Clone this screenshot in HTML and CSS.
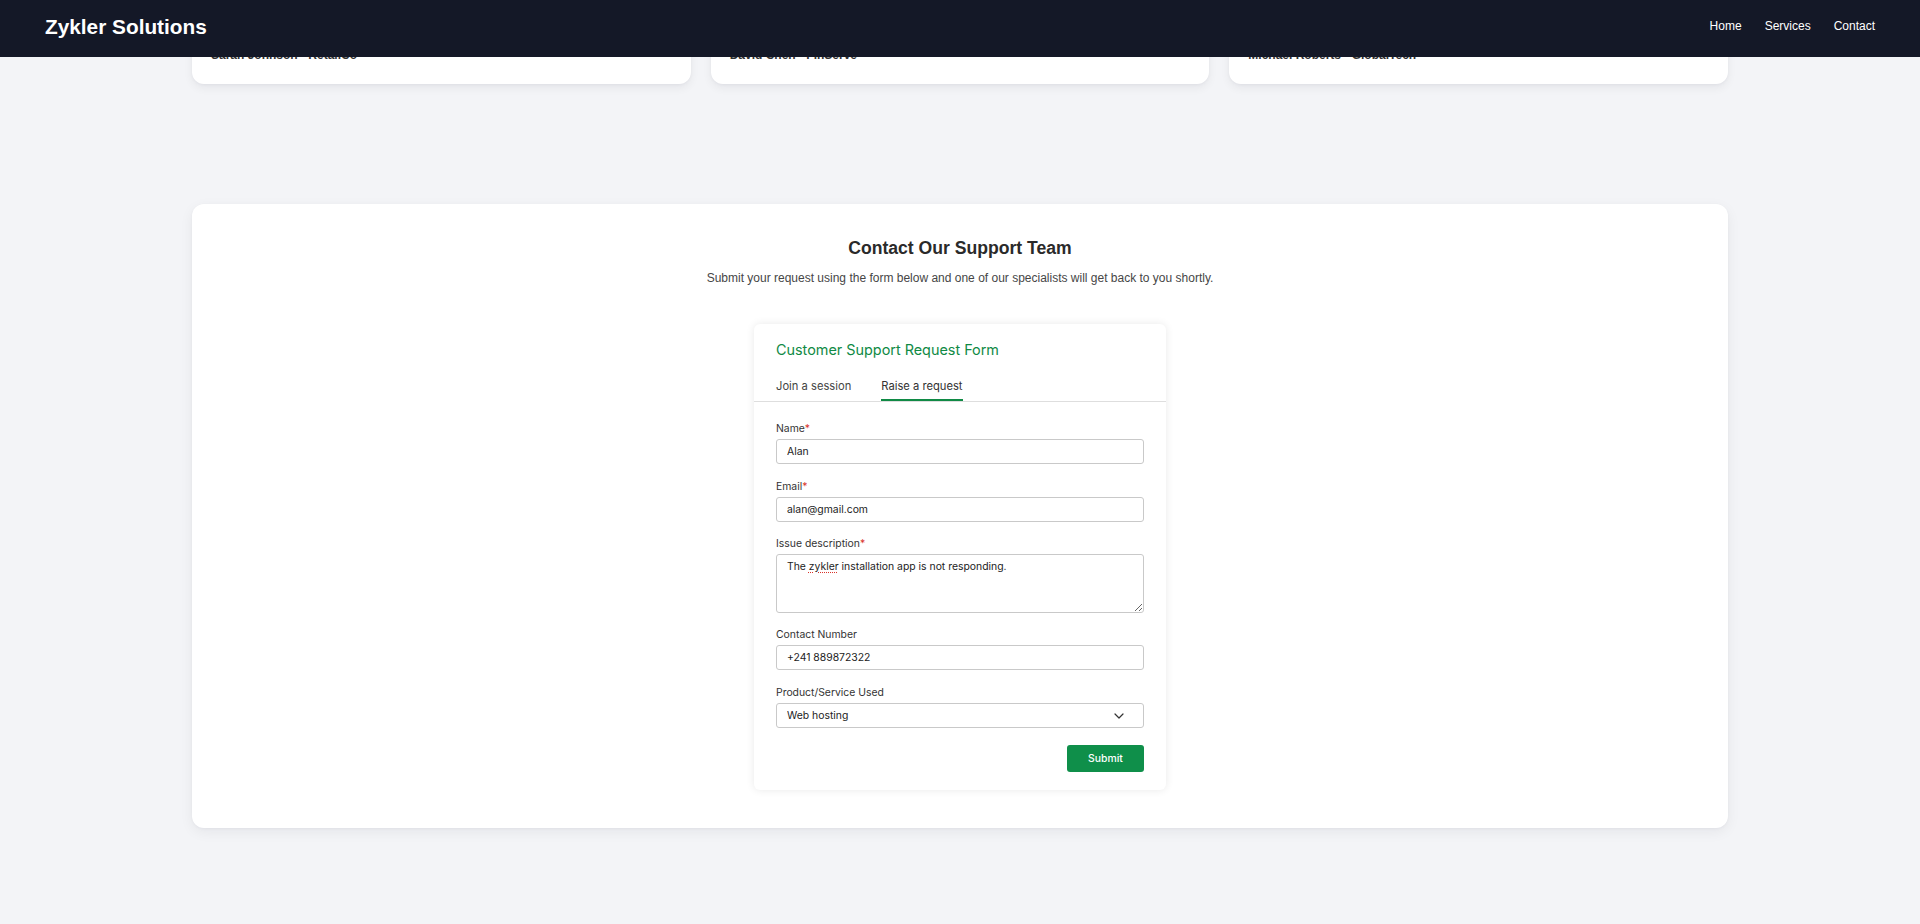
FILE: index.html
```html
<!DOCTYPE html>
<html lang="en">
<head>
<meta charset="utf-8">
<title>Zykler Solutions – Support</title>
<link rel="stylesheet" href="styles.css">
</head>
<body>
<header class="site-header">
  <div class="brand">Zykler Solutions</div>
  <nav class="site-nav">
    <a href="#">Home</a>
    <a href="#">Services</a>
    <a href="#">Contact</a>
  </nav>
</header>

<main class="page">
  <section class="testimonials">
    <article class="testimonial"><p class="testimonial-author">Sarah Johnson - RetailCo</p></article>
    <article class="testimonial"><p class="testimonial-author">David Chen - FinServe</p></article>
    <article class="testimonial"><p class="testimonial-author">Michael Roberts - GlobalTech</p></article>
  </section>

  <section class="contact">
    <h2 class="contact-title">Contact Our Support Team</h2>
    <p class="contact-lead">Submit your request using the form below and one of our specialists will get back to you shortly.</p>

    <div class="support-form">
      <div class="support-form__head">
        <h3 class="support-form__title">Customer Support Request Form</h3>
        <div class="tabs">
          <span class="tab">Join a session</span>
          <span class="tab tab--active">Raise a request</span>
        </div>
      </div>

      <form class="support-form__body">
        <div class="field">
          <label class="field-label">Name<span class="req">*</span></label>
          <input class="field-input" type="text" value="Alan">
        </div>
        <div class="field">
          <label class="field-label">Email<span class="req">*</span></label>
          <input class="field-input" type="text" value="alan@gmail.com">
        </div>
        <div class="field">
          <label class="field-label">Issue description<span class="req">*</span></label>
          <div class="field-input field-textarea">The <span class="misspelled">zykler</span> installation app is not responding.</div>
        </div>
        <div class="field">
          <label class="field-label">Contact Number</label>
          <input class="field-input" type="text" value="+241 889872322">
        </div>
        <div class="field">
          <label class="field-label">Product/Service Used</label>
          <div class="select-wrap">
            <select class="field-input field-select">
              <option>Web hosting</option>
            </select>
            <svg class="select-chevron" width="10" height="6" viewBox="0 0 10 6"><path d="M1 1l4 4 4-4" fill="none" stroke="#333" stroke-width="1.2" stroke-linecap="round" stroke-linejoin="round"/></svg>
          </div>
        </div>
        <div class="form-actions">
          <button class="submit-btn" type="button">Submit</button>
        </div>
      </form>
    </div>
  </section>
</main>
</body>
</html>
```

FILE: styles.css
```css
* {
  box-sizing: border-box;
}

html, body {
  margin: 0;
  padding: 0;
}

body {
  background: #f3f4f7;
  font-family: "Liberation Sans", Arial, sans-serif;
  color: #2b2b2b;
  min-height: 924px;
}

/* fixed top bar */
.site-header {
  position: fixed;
  top: 0;
  left: 0;
  right: 0;
  height: 57px;
  padding: 0 45px 3px;
  background: #141827;
  display: flex;
  align-items: center;
  justify-content: space-between;
  z-index: 10;
}

.brand {
  color: #fff;
  font-weight: 700;
  font-size: 20.8px;
}

.site-nav {
  display: flex;
  gap: 23px;
  padding-bottom: 2px;
}

.site-nav a {
  color: #fff;
  text-decoration: none;
  font-size: 12px;
}

.page {
  width: 1536px;
  margin: 0 auto;
}

/* testimonial cards */
.testimonials {
  display: grid;
  grid-template-columns: repeat(3, 1fr);
  gap: 20px;
  padding-top: 30px;
}

.testimonial {
  background: #fff;
  border-radius: 12px;
  padding: 18px 19px 22px;
  box-shadow: 0 4px 10px rgba(20, 24, 39, 0.06), 0 1px 3px rgba(20, 24, 39, 0.04);
}

.testimonial-author {
  margin: 0;
  font-size: 12px;
  font-weight: 700;
  color: #333;
}

/* contact panel */
.contact {
  margin-top: 120px;
  background: #fff;
  border-radius: 12px;
  padding: 34px 0 38px;
  box-shadow: 0 4px 14px rgba(20, 24, 39, 0.06), 0 1px 3px rgba(20, 24, 39, 0.04);
  text-align: center;
}

.contact-title {
  margin: 0 0 12px;
  font-size: 17.6px;
  font-weight: 700;
  color: #2a2a2a;
}

.contact-lead {
  margin: 0 0 39px;
  font-size: 12px;
  color: #464646;
}

/* embedded request form */
.support-form {
  width: 412px;
  margin: 0 auto;
  background: #fff;
  border-radius: 6px;
  box-shadow: 0 0 8px rgba(0, 0, 0, 0.09);
  text-align: left;
  font-family: Inter, "Noto Sans", sans-serif;
}

.support-form__head {
  padding: 16px 22px 0;
  border-bottom: 1px solid #dedede;
}

.support-form__title {
  margin: 0 0 18px;
  font-size: 14.4px;
  line-height: 20px;
  font-weight: 400;
  color: #108a45;
}

.tabs {
  display: flex;
  gap: 30px;
}

.tab {
  font-size: 11.2px;
  line-height: 16px;
  padding-bottom: 5px;
  border-bottom: 2px solid transparent;
  color: #444;
}

.tab--active {
  border-bottom-color: #108a45;
  color: #333;
}

.support-form__body {
  padding: 20px 22px 18px;
  margin: 0;
}

.field {
  display: flex;
  flex-direction: column;
  margin-bottom: 15.5px;
}

.field-label {
  font-size: 10.4px;
  line-height: 14px;
  color: #333;
  margin-bottom: 3px;
}

.req {
  color: #d9342b;
}

.field-input {
  height: 25px;
  width: 100%;
  border: 1px solid #c9c9c9;
  border-radius: 3px;
  padding: 0 10px;
  font-family: Inter, "Noto Sans", sans-serif;
  font-size: 10.4px;
  color: #222;
  background: #fff;
  outline: none;
}

.field-textarea {
  height: 58.5px;
  padding: 5px 10px;
  line-height: 14px;
  resize: vertical;
  overflow: auto;
}

.misspelled {
  text-decoration: underline dotted #d9342b;
  text-underline-offset: 2px;
}

.select-wrap {
  position: relative;
}

.field-select {
  appearance: none;
  -webkit-appearance: none;
}

.select-chevron {
  position: absolute;
  right: 20px;
  top: 10px;
  pointer-events: none;
}

.form-actions {
  display: flex;
  justify-content: flex-end;
  padding-top: 2px;
}

.submit-btn {
  width: 77px;
  height: 27px;
  border: none;
  border-radius: 3px;
  background: #0f8f4a;
  color: #fff;
  font-family: Inter, "Noto Sans", sans-serif;
  font-size: 10.4px;
  font-weight: 500;
}
```
